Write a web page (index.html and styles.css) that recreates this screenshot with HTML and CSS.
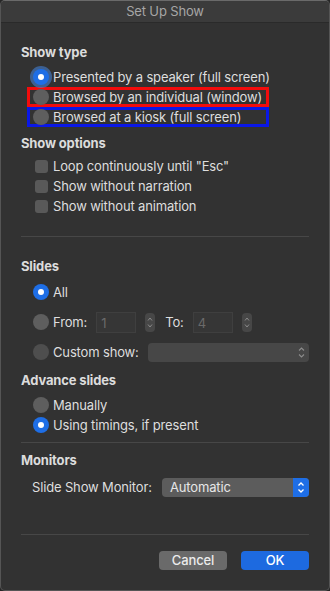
FILE: index.html
```html
<!doctype html>
<html>

	<head>
		<title>Set Up Show</title>
		<meta charset="utf-8" />
		<link rel="stylesheet" href="styles.css">
	</head>

	<body>

		<div class="window">
			<div class="titlebar">Set Up Show</div>

			<div class="content">
				<h2 class="head head-first">Show type</h2>
				<div class="group group-type">
					<div class="row"><span class="radio on focus"></span>Presented by a speaker (full screen)</div>
					<div class="row mark-red"><span class="radio"></span>Browsed by an individual (window)</div>
					<div class="row mark-blue"><span class="radio"></span>Browsed at a kiosk (full screen)</div>
				</div>

				<h2 class="head head-options">Show options</h2>
				<div class="group group-options">
					<div class="row"><span class="check"></span>Loop continuously until "Esc"</div>
					<div class="row"><span class="check"></span>Show without narration</div>
					<div class="row"><span class="check"></span>Show without animation</div>
				</div>

				<div class="sep sep-1"></div>

				<h2 class="head head-slides">Slides</h2>
				<div class="row row-all"><span class="radio on"></span>All</div>
				<div class="row row-from">
					<span class="radio"></span>From:
					<span class="field field-from">1</span>
					<span class="stepper">
						<svg width="10" height="19" viewBox="0 0 10 19"><path d="M3 7.5 L5 5 L7 7.5 M3 11.5 L5 14 L7 11.5" fill="none" stroke="#8a8a8a" stroke-width="1"/></svg>
					</span>
					<span class="to">To:</span>
					<span class="field field-to">4</span>
					<span class="stepper">
						<svg width="10" height="19" viewBox="0 0 10 19"><path d="M3 7.5 L5 5 L7 7.5 M3 11.5 L5 14 L7 11.5" fill="none" stroke="#8a8a8a" stroke-width="1"/></svg>
					</span>
				</div>
				<div class="row row-custom">
					<span class="radio dim"></span>Custom show:
					<span class="popup popup-off">
						<svg width="10" height="19" viewBox="0 0 10 19"><path d="M3 7.5 L5.5 5 L8 7.5 M3 11.5 L5.5 14 L8 11.5" fill="none" stroke="#8c8c8c" stroke-width="1.1"/></svg>
					</span>
				</div>

				<h2 class="head head-advance">Advance slides</h2>
				<div class="row row-manual"><span class="radio"></span>Manually</div>
				<div class="row"><span class="radio on"></span>Using timings, if present</div>

				<div class="sep sep-2"></div>

				<h2 class="head head-monitors">Monitors</h2>
				<div class="row row-monitor">
					<span class="monitor-label">Slide Show Monitor:</span>
					<span class="popup popup-on">
						<span class="popup-text">Automatic</span>
						<span class="popup-arrows">
							<svg width="16" height="19" viewBox="0 0 16 19"><path d="M5.5 7.5 L8 5 L10.5 7.5 M5.5 11.5 L8 14 L10.5 11.5" fill="none" stroke="#fff" stroke-width="1.3"/></svg>
						</span>
					</span>
				</div>

				<div class="sep sep-3"></div>

				<div class="buttons">
					<span class="btn btn-cancel">Cancel</span>
					<span class="btn btn-ok">OK</span>
				</div>
			</div>
		</div>

	</body>

</html>
```

FILE: styles.css
```css
body {
	margin: 0;
	background: #262626;
	font-family: Inter, "Open Sans", sans-serif;
	font-size: 13px;
	letter-spacing: -0.15px;
	color: #dedede;
}

.window {
	width: 330px;
	height: 591px;
	box-sizing: border-box;
	background: #323232;
	border: 1px solid #555;
	border-top-color: #6a6a6a;
	border-radius: 5px;
	overflow: hidden;
}

.titlebar {
	height: 21px;
	line-height: 21px;
	text-align: center;
	color: #a6a6a6;
	background: #3b3b3b;
	border-bottom: 1px solid #2a2a2a;
}

.content {
	padding: 0 20px;
}

.head {
	margin: 0;
	font-size: 13px;
	font-weight: 700;
	line-height: 16px;
	color: #dcdcdc;
}

.head-first {
	margin-top: 21px;
}

.group-type {
	margin-top: 7px;
	margin-left: 6px;
	width: 242px;
}

.head-options {
	margin-top: 8px;
}

.group-options {
	margin-top: 5px;
}

.row {
	display: flex;
	align-items: center;
	height: 20px;
	white-space: nowrap;
}

.group-type .row {
	padding-left: 6px;
}

.mark-red {
	outline: 3px solid #f20c0c;
	outline-offset: -3px;
}

.mark-blue {
	outline: 3px solid #0a18e6;
	outline-offset: -3px;
}

.radio {
	width: 16px;
	height: 16px;
	border-radius: 50%;
	background: #5e5e5e;
	margin-right: 4px;
	margin-left: 12px;
	flex: none;
	position: relative;
}

.group-type .radio {
	margin-left: 0;
}

.radio.dim {
	background: #4e4e4e;
}

.radio.on {
	background: #1e6ee6;
}

.radio.on::after {
	content: '';
	position: absolute;
	left: 5px;
	top: 5px;
	width: 6px;
	height: 6px;
	border-radius: 50%;
	background: #fff;
}

.radio.focus {
	box-shadow: 0 0 0 3px rgba(70, 135, 225, 0.55);
}

.check {
	width: 13px;
	height: 13px;
	border-radius: 3px;
	background: #595959;
	margin-left: 14px;
	margin-right: 5px;
	flex: none;
}

.sep {
	height: 1px;
	background: #474747;
}

.sep-1 {
	margin-top: 20px;
}

.head-slides {
	margin-top: 21px;
}

.row-all {
	margin-top: 8px;
}

.row-from {
	margin-top: 9px;
	height: 22px;
}

.field {
	line-height: 21px;
	background: #363636;
	border: 1px solid #3f3f3f;
	color: #6a6a6a;
	padding-left: 4px;
	box-sizing: border-box;
	width: 40px;
	height: 21px;
}

.field-from {
	margin-left: 9px;
}

.stepper {
	width: 10px;
	height: 19px;
	border-radius: 4px;
	background: #474747;
	margin-left: 9px;
	display: flex;
}

.to {
	margin-left: 10px;
	margin-right: 9px;
}

.row-custom {
	margin-top: 9px;
}

.popup {
	height: 19px;
	border-radius: 4px;
	display: flex;
	align-items: center;
	justify-content: flex-end;
	box-sizing: border-box;
	margin-left: auto;
}

.popup-off {
	width: 161px;
	background: #474747;
	padding-right: 3px;
}

.head-advance {
	margin-top: 10px;
}

.row-manual {
	margin-top: 7px;
}

.sep-2 {
	margin-top: 7px;
}

.head-monitors {
	margin-top: 9px;
}

.row-monitor {
	margin-top: 9px;
}

.monitor-label {
	margin-left: 11px;
}

.popup-on {
	width: 147px;
	background: #5c5c5c;
	justify-content: space-between;
	overflow: hidden;
}

.popup-text {
	padding-left: 8px;
	color: #e6e6e6;
}

.popup-arrows {
	width: 16px;
	height: 19px;
	background: #1e6ee6;
	display: flex;
}

.sep-3 {
	margin-top: 37px;
}

.buttons {
	margin-top: 16px;
	display: flex;
	justify-content: flex-end;
	gap: 14px;
}

.btn {
	width: 68px;
	height: 19px;
	line-height: 19px;
	border-radius: 4px;
	text-align: center;
	color: #ececec;
	font-weight: 500;
}

.btn-cancel {
	background: #6a6a6a;
}

.btn-ok {
	background: #1d6ae0;
	color: #fff;
}
```
